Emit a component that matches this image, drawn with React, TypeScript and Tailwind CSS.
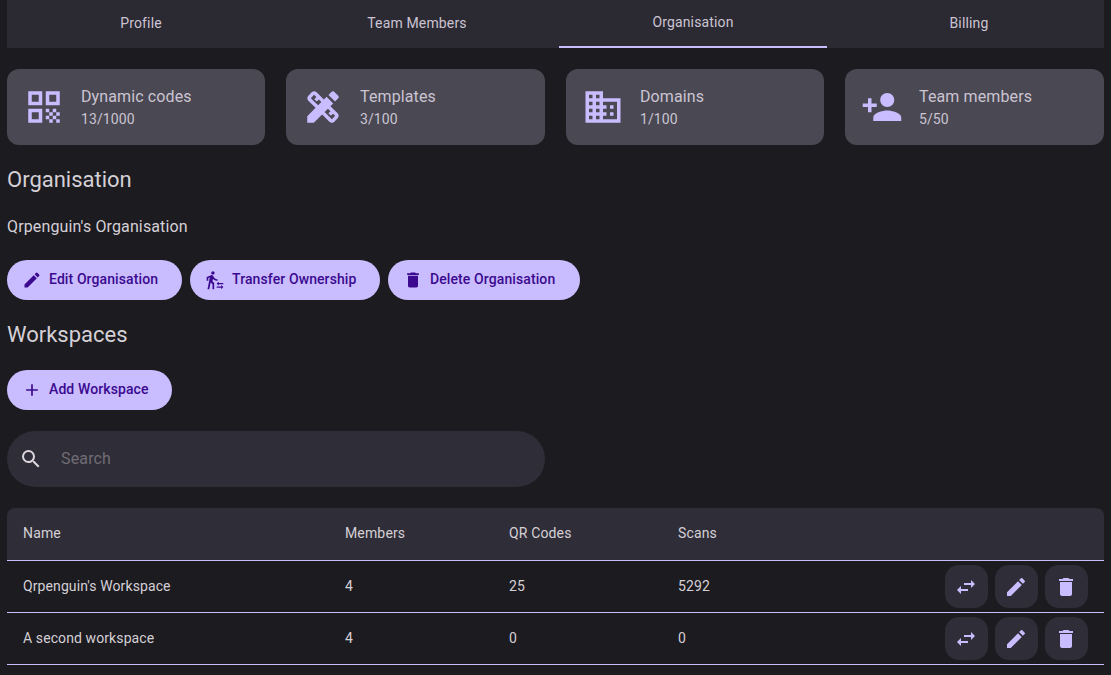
import React from 'react';
import { MdAdd, MdDelete, MdDesignServices, MdDomain, MdEdit, MdPersonAdd, MdQrCode, MdSearch, MdSwapHoriz, MdTransferWithinAStation } from 'react-icons/md';

const tabs = ['Profile', 'Team Members', 'Organisation', 'Billing'];

const stats = [
  { icon: MdQrCode, label: 'Dynamic codes', value: '13/1000' },
  { icon: MdDesignServices, label: 'Templates', value: '3/100' },
  { icon: MdDomain, label: 'Domains', value: '1/100' },
  { icon: MdPersonAdd, label: 'Team members', value: '5/50' },
];

const rows = [
  { name: "Qrpenguin's Workspace", members: '4', codes: '25', scans: '5292' },
  { name: 'A second workspace', members: '4', codes: '0', scans: '0' },
];

function FilledButton({ icon: Icon, label, width }: { icon: React.ComponentType<{ className?: string }>; label: string; width: string }) {
  return (
    <button className={`${width} h-10 flex items-center gap-[7px] pl-[15px] rounded-full bg-[#c9bcff] text-[#3b0a8f] text-sm font-medium tracking-[0.1px] whitespace-nowrap`}>
      <Icon className="w-5 h-5" />
      <span className="pb-0.5">{label}</span>
    </button>
  );
}

function RowAction({ icon: Icon }: { icon: React.ComponentType<{ className?: string }> }) {
  return (
    <button className="w-[43px] h-[43px] pr-px flex items-center justify-center rounded-[14px] bg-[#2f2d37] text-[#c9bcff]">
      <Icon className="w-6 h-6" />
    </button>
  );
}

export default function App() {
  return (
    <div className="h-[675px] overflow-hidden bg-[#1c1b20] px-[7px] font-['Roboto',sans-serif] text-[#e6e1e6]">
      {/* Tabs */}
      <div className="flex gap-2 h-12 bg-[#2b2932] w-[1097px]">
        {tabs.map((tab) => (
          <div
            key={tab}
            className={
              tab === 'Organisation'
                ? 'w-[268px] pb-0.5 flex items-center justify-center text-sm tracking-[0.15px] text-[#cbc4d2] border-b-2 border-[#c9bcff]'
                : 'w-[268px] pb-0.5 flex items-center justify-center text-sm tracking-[0.15px] text-[#cbc4d2]'
            }
          >
            {tab}
          </div>
        ))}
      </div>

      {/* Stat cards */}
      <div className="grid grid-cols-[258px_259px_258px_259px] gap-[21px] mt-[21px]">
        {stats.map((stat) => (
          <div key={stat.label} className="h-[76px] flex items-center gap-4 pl-4 rounded-xl bg-[#4a4852]">
            <stat.icon className="w-[42px] h-[42px] text-[#c9bcff] shrink-0" />
            <div className="pb-px">
              <div className="text-base leading-6 tracking-[0.12px] text-[#cbc4d2]">{stat.label}</div>
              <div className="text-sm leading-5 tracking-[0.1px] text-[#cbc4d2]">{stat.value}</div>
            </div>
          </div>
        ))}
      </div>

      <h2 className="mt-[21px] text-[22px] leading-7 text-[#d5d0d6]">Organisation</h2>
      <p className="mt-[21px] text-base leading-6 tracking-[0.13px] text-[#d5d0d6]">Qrpenguin's Organisation</p>

      <div className="flex gap-2 mt-[21px]">
        <FilledButton icon={MdEdit} label="Edit Organisation" width="w-[175px]" />
        <FilledButton icon={MdTransferWithinAStation} label="Transfer Ownership" width="w-[190px]" />
        <FilledButton icon={MdDelete} label="Delete Organisation" width="w-[192px]" />
      </div>

      <h2 className="mt-[21px] text-[22px] leading-7 text-[#d5d0d6]">Workspaces</h2>

      <div className="flex mt-[21px]">
        <FilledButton icon={MdAdd} label="Add Workspace" width="w-[165px]" />
      </div>

      {/* Search */}
      <div className="mt-[21px] w-[538px] h-14 flex items-center gap-[18px] pl-[12px] rounded-full bg-[#2f2d37]">
        <MdSearch className="w-6 h-6 text-[#dcd6dc]" />
        <span className="text-base tracking-[0.15px] text-[#6f6c74]">Search</span>
      </div>

      {/* Table */}
      <div className="mt-[21px]">
        <div className="h-[53px] pb-0.5 flex items-center px-4 rounded-t-lg bg-[#2f2d37] border-b border-[#c9bcff] text-sm tracking-[0.15px] text-[#d5d0d6]">
          <div className="w-[322px]">Name</div>
          <div className="w-[164px]">Members</div>
          <div className="w-[169px]">QR Codes</div>
          <div>Scans</div>
        </div>
        {rows.map((row) => (
          <div key={row.name} className="h-[52px] flex items-center pl-4 pr-4 border-b border-[#c9bcff] text-sm tracking-[0.1px] text-[#d5d0d6]">
            <div className="w-[322px] pb-0.5">{row.name}</div>
            <div className="w-[164px] pb-0.5">{row.members}</div>
            <div className="w-[169px] pb-0.5">{row.codes}</div>
            <div className="pb-0.5">{row.scans}</div>
            <div className="ml-auto flex gap-[7px]">
              <RowAction icon={MdSwapHoriz} />
              <RowAction icon={MdEdit} />
              <RowAction icon={MdDelete} />
            </div>
          </div>
        ))}
      </div>
    </div>
  );
}
